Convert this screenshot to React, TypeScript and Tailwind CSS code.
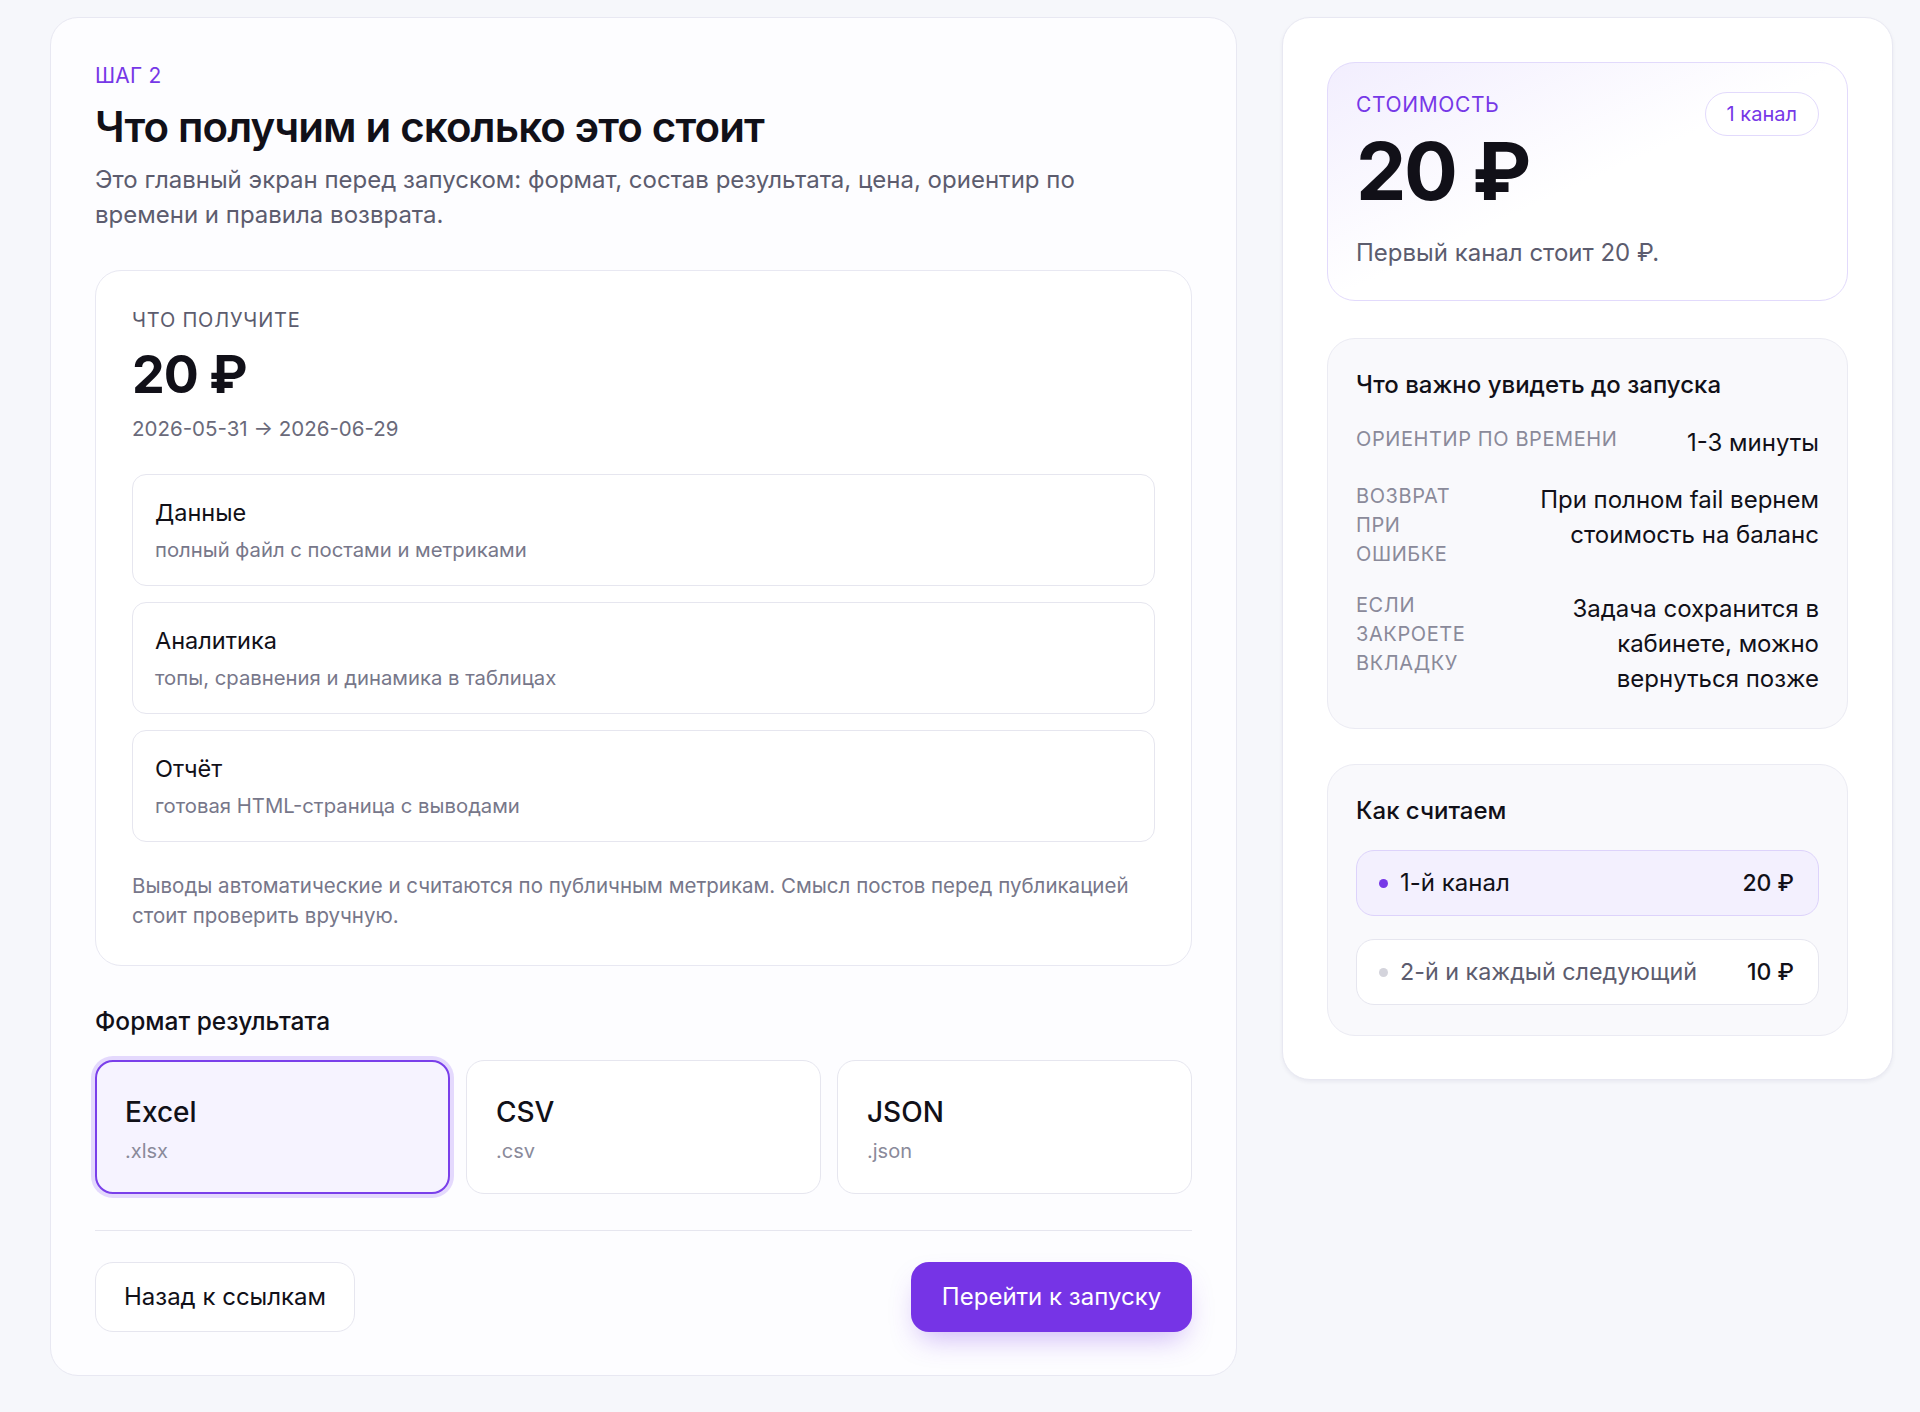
import React from "react";

const items = [
  { title: "Данные", sub: "полный файл с постами и метриками" },
  { title: "Аналитика", sub: "топы, сравнения и динамика в таблицах" },
  { title: "Отчёт", sub: "готовая HTML-страница с выводами" },
];

const formats = [
  { title: "Excel", ext: ".xlsx", active: true },
  { title: "CSV", ext: ".csv", active: false },
  { title: "JSON", ext: ".json", active: false },
];

const facts = [
  { label: "Ориентир по времени", value: "1-3 минуты", wide: true },
  { label: "Возврат при ошибке", value: "При полном fail вернем стоимость на баланс", wide: false },
  { label: "Если закроете вкладку", value: "Задача сохранится в кабинете, можно вернуться позже", wide: false },
];

export default function App() {
  return (
    <div
      className="min-h-[1412px] bg-[#f6f7fb] text-[#111018]"
      style={{ fontFamily: "Inter, 'Noto Sans', sans-serif" }}
    >
      <div className="flex items-start gap-[45px] pl-[50px] pr-[27px] pt-[17px]">
        {/* Left: step card */}
        <div className="w-[1187px] flex-none rounded-[28px] border border-[#e8e8f2] bg-[#fdfdff] px-[44px] pt-[44px] pb-[43px]">
          <div className="text-[21px] leading-[28px] text-[#7638e7] tracking-[0.01em]">ШАГ 2</div>
          <h1 className="mt-[13px] text-[42px] leading-[48px] font-semibold tracking-[-0.02em]">
            Что получим и сколько это стоит
          </h1>
          <p className="mt-[11px] max-w-[1000px] text-[24px] leading-[35px] text-[#5c5c6e]">
            Это главный экран перед запуском: формат, состав результата, цена, ориентир по времени и правила возврата.
          </p>

          {/* What you get */}
          <div className="mt-[38px] rounded-[26px] border border-[#e8e8f2] bg-white px-[36px] pt-[36px] pb-[34px]">
            <div className="text-[20px] leading-[26px] uppercase tracking-[0.04em] text-[#5c5c6e]">Что получите</div>
            <div className="mt-[14px] text-[52px] leading-[56px] font-bold tracking-[-0.02em]">20 ₽</div>
            <div className="mt-[12px] text-[20.5px] leading-[28px] text-[#6a6a7a]">2026-05-31 → 2026-06-29</div>

            <div className="mt-[31px] flex flex-col gap-4">
              {items.map((it) => (
                <div key={it.title} className="rounded-[14px] border border-[#e6e6ef] bg-white px-[22px] pt-[23px] pb-[22px]">
                  <div className="text-[23.5px] leading-[30px] text-[#111018]">{it.title}</div>
                  <div className="mt-[9px] text-[20.3px] leading-[26px] text-[#77778a]">{it.sub}</div>
                </div>
              ))}
            </div>

            <p className="mt-[29px] text-[20.5px] leading-[30px] text-[#77778a]">
              Выводы автоматические и считаются по публичным метрикам. Смысл постов перед публикацией стоит проверить вручную.
            </p>
          </div>

          {/* Format */}
          <div className="mt-[40px] text-[24.5px] leading-[30px] font-medium">Формат результата</div>
          <div className="mt-[24px] grid grid-cols-3 gap-4">
            {formats.map((f) => (
              <div
                key={f.title}
                className={
                  f.active
                    ? "h-[134px] rounded-[18px] border-2 border-[#7a3fea] bg-[#f6f3ff] px-[28px] pt-[33px] ring-4 ring-[#e4d9fd]"
                    : "h-[134px] rounded-[18px] border border-[#e6e6ef] bg-white px-[29px] pt-[34px]"
                }
              >
                <div className="text-[28px] leading-[34px] font-medium">{f.title}</div>
                <div className="mt-[8px] text-[20px] leading-[28px] text-[#8a8a9a]">{f.ext}</div>
              </div>
            ))}
          </div>

          <div className="mt-[36px] h-px bg-[#e6e6ef]" />

          <div className="mt-[31px] flex items-center justify-between">
            <button className="h-[70px] w-[260px] rounded-[18px] border border-[#e6e6ef] bg-white text-[24px] text-[#111018]">
              Назад к ссылкам
            </button>
            <button className="h-[70px] w-[281px] rounded-[18px] bg-[#7634e6] text-[24px] text-white shadow-[0_14px_28px_-8px_rgba(118,52,230,0.35)]">
              Перейти к запуску
            </button>
          </div>
        </div>

        {/* Right: summary */}
        <div className="flex-1 rounded-[28px] border border-[#e8e8f2] bg-white px-[44px] pt-[44px] pb-[43px] shadow-[0_2px_4px_rgba(20,20,60,0.06)]">
          {/* Price */}
          <div className="rounded-[28px] border border-[#e2dafc] bg-gradient-to-br from-[#f2eefe] via-white to-white px-[28px] pt-[28px] pb-[32px]">
            <div className="flex items-start justify-between">
              <div>
                <div className="text-[21px] leading-[28px] uppercase text-[#7638e7] tracking-[0.03em]">Стоимость</div>
                <div className="mt-[13px] text-[80px] leading-[78px] font-bold tracking-[-0.03em]">20 ₽</div>
              </div>
              <div className="mt-[1px] flex h-[44px] items-center rounded-full border border-[#e2dafc] bg-white px-[21px] text-[20px] text-[#7638e7]">
                1 канал
              </div>
            </div>
            <div className="mt-[28px] text-[24px] leading-[30px] text-[#5c5c6e]">Первый канал стоит 20 ₽.</div>
          </div>

          {/* Facts */}
          <div className="mt-[37px] rounded-[28px] border border-[#ebebf3] bg-[#f9f9fc] px-[28px] pt-[31px] pb-[32px]">
            <div className="text-[24px] leading-[30px] font-medium">Что важно увидеть до запуска</div>
            <div className="mt-[25px] flex flex-col gap-[22px]">
              {facts.map((f) => (
                <div key={f.label} className="flex items-start justify-between gap-4">
                  <div
                    className={
                      f.wide
                        ? "whitespace-nowrap text-[20px] leading-[29px] uppercase tracking-[0.03em] text-[#8a8a9a]"
                        : "w-[130px] text-[20px] leading-[29px] uppercase tracking-[0.03em] text-[#8a8a9a]"
                    }
                  >
                    {f.label}
                  </div>
                  <div className="max-w-[292px] text-right text-[24px] leading-[35px] text-[#111018]">{f.value}</div>
                </div>
              ))}
            </div>
          </div>

          {/* How we count */}
          <div className="mt-[35px] rounded-[28px] border border-[#ebebf3] bg-[#f9f9fc] px-[28px] pt-[31px] pb-[30px]">
            <div className="text-[24px] leading-[30px] font-medium">Как считаем</div>
            <div className="mt-[24px] flex flex-col gap-[23px]">
              <div className="flex h-[66px] items-center justify-between rounded-[18px] border border-[#ddd3fb] bg-[#f3f0fe] pl-[22px] pr-[24px]">
                <div className="flex items-center gap-[12px]">
                  <span className="h-[9px] w-[9px] rounded-full bg-[#7638e7]" />
                  <span className="text-[24px] text-[#111018]">1-й канал</span>
                </div>
                <span className="text-[23px] font-medium">20 ₽</span>
              </div>
              <div className="flex h-[66px] items-center justify-between rounded-[18px] border border-[#e6e6ef] bg-white pl-[22px] pr-[24px]">
                <div className="flex items-center gap-[12px]">
                  <span className="h-[9px] w-[9px] rounded-full bg-[#d4d4dc]" />
                  <span className="text-[23.3px] text-[#5c5c6e]">2-й и каждый следующий</span>
                </div>
                <span className="text-[23px] font-medium">10 ₽</span>
              </div>
            </div>
          </div>
        </div>
      </div>
    </div>
  );
}
